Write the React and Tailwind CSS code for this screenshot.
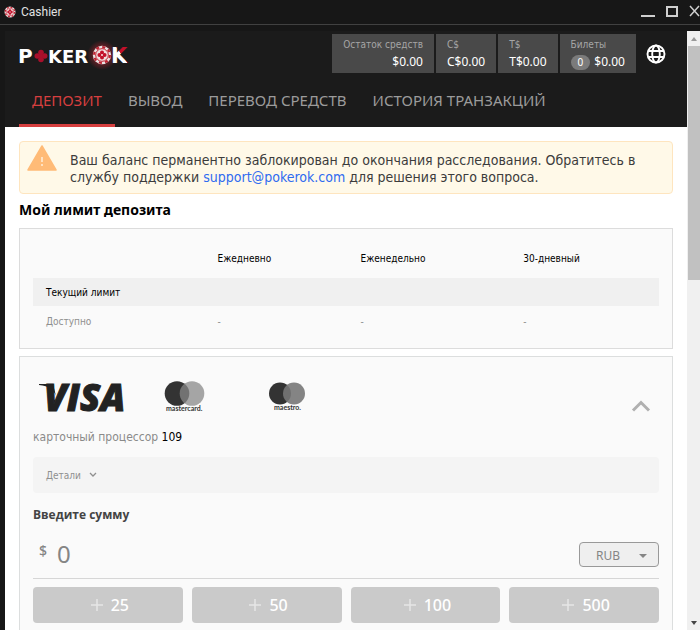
import React from "react";

function Chip({ className }) {
  return (
    <svg viewBox="0 0 24 24" className={className} aria-hidden="true">
      <circle cx="12" cy="12" r="11" fill="#e9e2e2" />
      <circle cx="12" cy="12" r="9.500" fill="none" stroke="#c02231" strokeWidth="2.600" strokeDasharray="3.700 3.760" />
      <circle cx="12" cy="12" r="7.600" fill="#f1dede" stroke="#c22534" strokeWidth="1.200" />
      <g fill="#c3102a">
        <circle cx="12" cy="8.900" r="2.400" />
        <circle cx="12" cy="15.100" r="2.400" />
        <circle cx="8.900" cy="12" r="2.400" />
        <circle cx="15.100" cy="12" r="2.400" />
      </g>
      <path d="M12 10.800l1.200 1.200-1.200 1.200-1.200-1.200z" fill="#f7e9e9" />
    </svg>
  );
}

function Logo() {
  return (
    <svg viewBox="0 0 120 32" className="h-8 w-[120px]" role="img" aria-label="PokerOK">
      <defs>
        <radialGradient id="glow">
          <stop offset="0.5" stopColor="#c22534" stopOpacity="0.5" />
          <stop offset="1" stopColor="#c22534" stopOpacity="0" />
        </radialGradient>
        <linearGradient id="tip" x1="0" y1="1" x2="1" y2="0">
          <stop offset="0.58" stopColor="#ffffff" />
          <stop offset="0.6" stopColor="#c3102a" />
        </linearGradient>
      </defs>
      <circle cx="85" cy="17" r="15" fill="url(#glow)" />
      <g fontFamily="DejaVu Sans, sans-serif" fontWeight="700" fill="#fff">
        <text x="1" y="25" fontSize="20">P</text>
        <text x="31" y="25" fontSize="18">KER</text>
        <text x="94" y="25" fontSize="21" fill="url(#tip)">K</text>
      </g>
      <g fill="#a80f2b">
        <circle cx="24" cy="14.500" r="2.800" />
        <circle cx="24" cy="21.500" r="2.800" />
        <circle cx="20.300" cy="18" r="2.800" />
        <circle cx="27.700" cy="18" r="2.800" />
        <circle cx="24" cy="18" r="2" />
      </g>
      <svg x="75" y="7" width="20" height="20"><Chip /></svg>
    </svg>
  );
}

function Balance({ label, children, right }) {
  return (
    <div className={"flex h-[39px] flex-col bg-[#494949] px-[11px] pt-[2px] " + (right ? "items-end" : "items-start")}>
      <span className="font-['DejaVu_Sans_Condensed',sans-serif] text-[10px] leading-[18px] text-[#a6a6a6]">{label}</span>
      <span className="flex items-center gap-1 text-xs leading-[16px] text-white">{children}</span>
    </div>
  );
}

const tabs = ["ВЫВОД", "ПЕРЕВОД СРЕДСТВ", "ИСТОРИЯ ТРАНЗАКЦИЙ"];
const amounts = [25, 50, 100, 500];

function TitleBar() {
  return (
    <div className="flex h-[25px] shrink-0 items-center border-b border-[#414141] bg-[#171717] pl-1">
      <Chip className="h-3 w-3" />
      <span className="ml-[5px] font-[Roboto,sans-serif] text-xs leading-[20px] text-[#e2e2e2]">Cashier</span>
      <div className="ml-auto flex items-center gap-[11px]">
        <button aria-label="Свернуть" className="flex h-[10px] w-[14px] items-end"><span className="h-[2px] w-full bg-[#cfcfcf]" /></button>
        <button aria-label="Развернуть" className="mb-[2px] h-[11px] w-3 border-2 border-[#cfcfcf]" />
        <button aria-label="Закрыть" className="mb-[2px] w-[11px]">
          <svg viewBox="0 0 11 12" className="h-3 w-[11px]"><path d="M1 1l9 10M10 1L1 11" stroke="#cfcfcf" strokeWidth="1.500" /></svg>
        </button>
      </div>
    </div>
  );
}

function Header() {
  return (
    <header className="h-24 bg-[#1b1b1b]">
      <div className="flex items-center pl-3 pr-[21px] pt-[3px]">
        <Logo />
        <div className="ml-auto flex gap-[2px]">
          <Balance label="Остаток средств" right>$0.00</Balance>
          <Balance label="C$">C$0.00</Balance>
          <Balance label="T$">T$0.00</Balance>
          <Balance label="Билеты">
            <span className="rounded-full bg-[#7b7b7b] px-[7px] text-[10px] leading-[15px]">0</span>
            $0.00
          </Balance>
        </div>
        <button aria-label="Язык" className="ml-[10px]">
          <svg viewBox="0 0 20 20" className="h-5 w-5" fill="none" stroke="#fff" strokeWidth="1.900">
            <circle cx="10" cy="10" r="8.500" />
            <ellipse cx="10" cy="10" rx="3.800" ry="8.500" />
            <path d="M2.500 7h15M2.500 13h15" />
          </svg>
        </button>
      </div>
      <nav className="flex h-[54px] pl-[14px] text-[15px] leading-[55px] text-[#9b9b9b]">
        <a href="#deposit" className="border-b-[3px] border-[#d63f3f] px-[13px] text-[#d63f3f]">ДЕПОЗИТ</a>
        {tabs.map((t) => (
          <a key={t} href="#tab" className="px-[13px]">{t}</a>
        ))}
      </nav>
    </header>
  );
}

function Alert() {
  return (
    <div role="alert" className="flex rounded-sm border border-[#fee5bf] bg-[#fff9e8] pb-[7px]">
      <svg viewBox="0 0 30 26" className="ml-[7px] mt-[3px] h-[26px] w-[30px] shrink-0" aria-hidden="true">
        <path d="M15 1L29 25H1z" fill="#ffbb77" stroke="#ffbb77" strokeWidth="1.500" strokeLinejoin="round" />
        <path d="M15 12v5M15 19v2" stroke="#fff0dc" strokeWidth="1.500" />
      </svg>
      <p className="ml-[13px] mt-[10px] font-['DejaVu_Sans_Condensed',sans-serif] text-sm leading-[17px] text-[#3c3c3c]">
        Ваш баланс перманентно заблокирован до окончания расследования. Обратитесь в
        службу поддержки <a href="mailto:support@pokerok.com" className="text-[#2f6bf0]">support@pokerok.com</a> для решения этого вопроса.
      </p>
    </div>
  );
}

function Limits() {
  return (
    <section className="mt-[7px] border border-[#dcdcdc] bg-[#fafafa] px-[13px] pb-[12px] pt-[10px]">
      <table className="w-full table-fixed text-left font-['DejaVu_Sans_Condensed',sans-serif] text-[10px]">
        <colgroup><col className="w-[29%]" /><col className="w-[23%]" /><col className="w-[26%]" /><col className="w-[22%]" /></colgroup>
        <thead>
          <tr className="h-[39px] text-black">
            <td /><th className="pl-[3px] font-normal">Ежедневно</th><th className="pl-[2px] font-normal">Еженедельно</th><th className="pl-[2px] font-normal">30-дневный</th>
          </tr>
        </thead>
        <tbody>
          <tr className="h-[28px] bg-[#f0f0f0] text-black"><th className="pl-[13px] font-normal">Текущий лимит</th><td /><td /><td /></tr>
          <tr className="h-[30px] text-[#8f8f8f]"><th className="pl-[13px] font-normal">Доступно</th><td className="pl-[3px]">-</td><td className="pl-[2px]">-</td><td className="pl-[2px]">-</td></tr>
        </tbody>
      </table>
    </section>
  );
}

function CardLogos() {
  return (
    <svg viewBox="0 0 280 40" className="h-10 w-[280px] overflow-visible" role="img" aria-label="Visa, Mastercard, Maestro">
      <path d="M6 6h14l3 12c-2-6-7-10-17-11z" fill="#222" />
      <text x="11" y="33" fontFamily="Open Sans, sans-serif" fontWeight="800" fontStyle="italic" fontSize="37" fill="#222" stroke="#222" strokeWidth="1">VISA</text>
      <circle cx="144" cy="15.500" r="12.300" fill="#333" />
      <circle cx="159" cy="15.500" r="12.300" fill="#888" fillOpacity="0.750" />
      <text x="133" y="33" fontFamily="Lato, sans-serif" fontWeight="700" fontSize="7" fill="#333">mastercard.</text>
      <circle cx="247" cy="15.500" r="11" fill="#333" />
      <circle cx="261" cy="15.500" r="11" fill="#777" fillOpacity="0.900" />
      <text x="241" y="32" fontFamily="Lato, sans-serif" fontWeight="700" fontSize="7" fill="#333">maestro.</text>
    </svg>
  );
}

function Processor() {
  return (
    <section className="mt-[7px] border border-b-0 border-[#dcdede] bg-[#fafafa] px-[13px] pt-[21px] pb-5">
      <div className="flex items-center justify-between pr-2">
        <CardLogos />
        <button aria-label="Свернуть способ оплаты">
          <svg viewBox="0 0 20 12" className="mt-4 h-3 w-5" fill="none" stroke="#b0b0b0" strokeWidth="3"><path d="M2 10.500l8-8 8 8" /></svg>
        </button>
      </div>
      <p className="mt-[9px] font-['DejaVu_Sans_Condensed',sans-serif] text-xs leading-[20px] text-[#8a8a8a]">карточный процессор <span className="text-black">109</span></p>
      <button className="mt-[10px] flex h-9 w-full items-center gap-2 rounded-sm bg-[#f4f4f4] px-[13px] font-['DejaVu_Sans_Condensed',sans-serif] text-[10px] text-[#8f8f8f]">
        Детали
        <svg viewBox="0 0 8 6" className="h-[6px] w-2" fill="none" stroke="#8f8f8f" strokeWidth="1.300"><path d="M1 1l3 3 3-3" /></svg>
      </button>
      <label htmlFor="amount" className="mt-3 block font-['Open_Sans',sans-serif] text-xs font-bold leading-[20px] text-[#444]">Введите сумму</label>
      <div className="mt-[6px] flex h-12 items-center border-b border-[#d6d6d6]">
        <span className="mb-2 ml-[6px] text-sm font-medium text-[#858585]">$</span>
        <input id="amount" defaultValue="0" className="mb-[2px] ml-[10px] min-w-0 flex-1 bg-transparent text-2xl text-[#858585] outline-none" />
        <div className="relative">
          <select aria-label="Валюта" className="h-[25px] w-20 appearance-none rounded border border-[#999] bg-[#efefef] pl-4 pt-[2px] text-xs text-[#858585]"><option>RUB</option></select>
          <svg viewBox="0 0 8 4" className="pointer-events-none absolute right-3 top-3 h-1 w-2" fill="#858585"><path d="M0 0h8l-4 4z" /></svg>
        </div>
      </div>
      <div className="mt-2 grid grid-cols-4 gap-[9px]">
        {amounts.map((a) => (
          <button key={a} className="flex h-9 items-center justify-center gap-2 rounded-sm bg-[#cacaca] pl-1 text-base font-medium text-white">
            <svg viewBox="0 0 12 12" className="h-3 w-3" stroke="#e6e6e6" strokeWidth="1.500"><path d="M6 0v12M0 6h12" /></svg>
            {a}
          </button>
        ))}
      </div>
    </section>
  );
}

function Scrollbar() {
  return (
    <div className="flex w-[13px] shrink-0 flex-col items-end bg-[#f0f0f0]" aria-hidden="true">
      <svg viewBox="0 0 12 15" className="h-[15px] w-3"><path d="M3 10l3-4 3 4z" fill="#999" /></svg>
      <div className="w-3 basis-[39%] bg-[#c1c1c1]" />
      <svg viewBox="0 0 12 15" className="mt-auto h-[15px] w-3"><path d="M3 6h6l-3 4z" fill="#444" /></svg>
    </div>
  );
}

export default function App() {
  return (
    <div className="flex h-screen flex-col overflow-hidden bg-[#171717] font-['Noto_Sans',sans-serif]">
      <TitleBar />
      <div className="mt-[6px] flex min-h-0 flex-1 pl-[5px]">
        <div className="min-w-0 flex-1 overflow-hidden bg-white">
          <Header />
          <main className="px-[14px] pt-[14px]">
            <Alert />
            <h1 className="mt-[5px] text-sm font-bold leading-[22px] text-black">Мой лимит депозита</h1>
            <Limits />
            <Processor />
          </main>
        </div>
        <Scrollbar />
      </div>
    </div>
  );
}
